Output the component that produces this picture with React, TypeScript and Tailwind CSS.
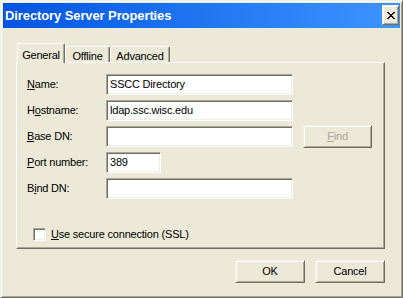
import React from "react";

const raised =
  "border border-[#F1EFE2] border-r-[#716F64] border-b-[#716F64] shadow-[inset_1px_1px_white,inset_-1px_-1px_#ACA899]";
const sunken =
  "border border-[#ACA899] border-r-white border-b-white shadow-[inset_1px_1px_#716F64,inset_-1px_-1px_#F1EFE2]";

function Field({ value, w }: { value?: string; w: string }) {
  return (
    <div className={`${sunken} ${w} h-[21px] bg-white flex items-center pl-[3px] whitespace-nowrap`}>
      {value}
    </div>
  );
}

function Row({ label, children }: { label: React.ReactNode; children: React.ReactNode }) {
  return (
    <div className="flex items-center h-[21px]">
      <div className="w-[79px] whitespace-nowrap">{label}</div>
      {children}
    </div>
  );
}

const xRects: [number, number, number][] = [
  [0, 0, 2], [6, 0, 2],
  [1, 1, 2], [5, 1, 2],
  [2, 2, 4],
  [3, 3, 2],
  [2, 4, 4],
  [1, 5, 2], [5, 5, 2],
  [0, 6, 2], [6, 6, 2],
];

export default function App() {
  return (
    <div className="w-[403px] h-[298px] font-['Liberation_Sans',Arial,sans-serif] text-[11px] tracking-[-0.2px] text-black">
      <div className={`w-full h-full ${raised} p-[2px] bg-[#ECE9D8] flex flex-col`}>
        {/* Title bar */}
        <div className="h-[25px] bg-gradient-to-r from-[#0054E3] to-[#3D95FF] flex items-center justify-between pl-[2px] pr-[1px]">
          <span className="text-white font-bold text-[13px] tracking-[-0.1px] whitespace-nowrap">Directory Server Properties</span>
          <div className={`${raised} w-[17px] h-[20px] bg-[#ECE9D8] flex items-center justify-center mt-[-1px]`}>
            <svg width="8" height="7" viewBox="0 0 8 7" shapeRendering="crispEdges">
              {xRects.map(([x, y, w], i) => (
                <rect key={i} x={x} y={y} width={w} height={1} fill="black" />
              ))}
            </svg>
          </div>
        </div>

        {/* Content */}
        <div className="flex-1 flex flex-col pl-[13px] pr-[15px] pt-[15px]">
          <div className="flex items-end h-[20px] relative z-10 ml-[1px]">
            <div className="w-[48px] h-[20px] bg-[#ECE9D8] border-l border-t border-white border-r border-r-[#716F64] shadow-[inset_-1px_0_#ACA899] rounded-tl-[2px] rounded-tr-[2px] flex items-start justify-center pt-[3px]">
              General
            </div>
            <div className="w-[45px] h-[16px] mb-[1px] bg-[#ECE9D8] border-l border-t border-white border-r border-r-[#716F64] shadow-[inset_-1px_0_#ACA899] rounded-tl-[2px] rounded-tr-[2px] flex items-start justify-center pt-[1px]">
              Offline
            </div>
            <div className="w-[60px] h-[16px] mb-[1px] bg-[#ECE9D8] border-l border-t border-white border-r border-r-[#716F64] shadow-[inset_-1px_0_#ACA899] rounded-tl-[2px] rounded-tr-[2px] flex items-start justify-center pt-[1px]">
              Advanced
            </div>
          </div>

          <div className="-mt-[1px] h-[187px] border border-white border-r-[#716F64] border-b-[#716F64] shadow-[inset_-1px_-1px_#ACA899] pl-[10px] pt-[11px] flex flex-col">
            <div className="flex flex-col gap-[5px]">
              <Row label={<><span className="underline">N</span>ame:</>}>
                <Field value="SSCC Directory" w="w-[187px]" />
              </Row>
              <Row label={<>H<span className="underline">o</span>stname:</>}>
                <Field value="ldap.ssc.wisc.edu" w="w-[187px]" />
              </Row>
              <Row label={<><span className="underline">B</span>ase DN:</>}>
                <Field w="w-[187px]" />
                <div className={`${raised} ml-[10px] w-[69px] h-[23px] shrink-0 flex items-center justify-center text-[#ACA899]`}>
                  <span><span className="underline">F</span>ind</span>
                </div>
              </Row>
              <Row label={<><span className="underline">P</span>ort number:</>}>
                <Field value="389" w="w-[55px]" />
              </Row>
              <Row label={<>B<span className="underline">i</span>nd DN:</>}>
                <Field w="w-[187px]" />
              </Row>
            </div>
            <div className="flex items-center mt-[27px] ml-[6px]">
              <div className={`${sunken} w-[13px] h-[13px] bg-white`} />
              <span className="ml-[5px] whitespace-nowrap">
                <span className="underline">U</span>se secure connection (SSL)
              </span>
            </div>
          </div>

          <div className="flex justify-end gap-[10px] mt-[11px]">
            <div className={`${raised} w-[70px] h-[23px] flex items-center justify-center`}>OK</div>
            <div className={`${raised} w-[70px] h-[23px] flex items-center justify-center`}>Cancel</div>
          </div>
        </div>
      </div>
    </div>
  );
}
